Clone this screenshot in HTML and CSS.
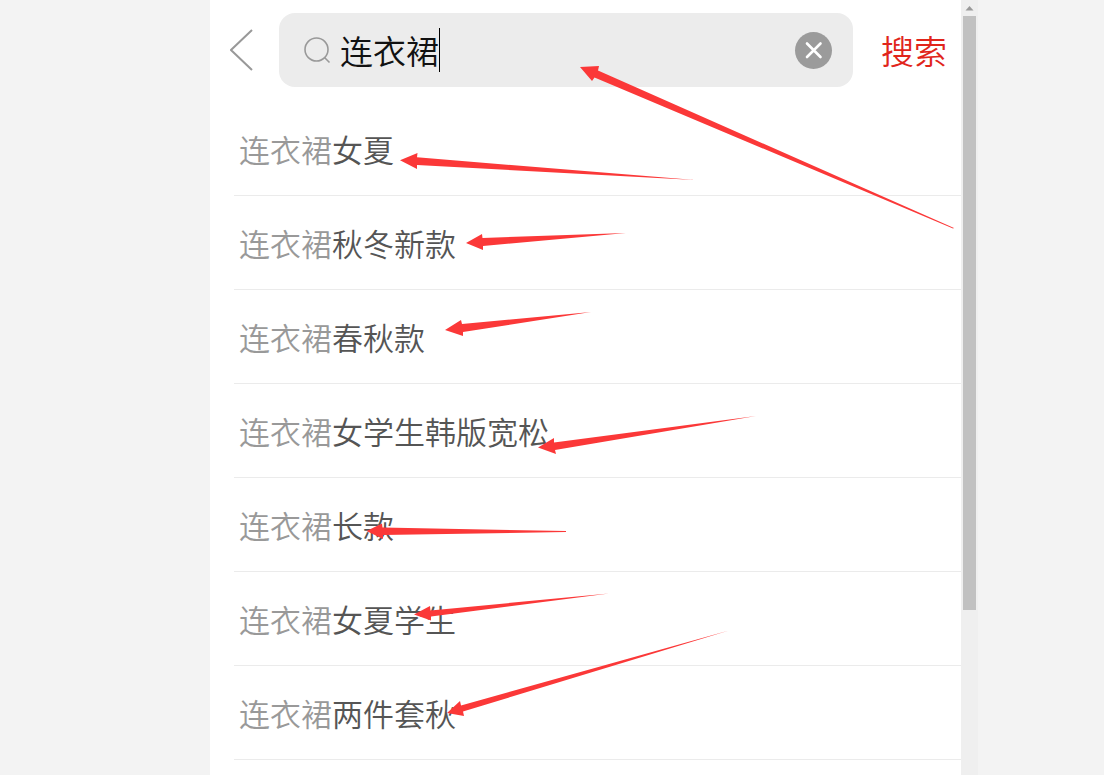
FILE: index.html
```html
<!DOCTYPE html>
<html lang="zh-CN">
<head>
    <meta charset="UTF-8">
    <title>搜索</title>
    <link rel="stylesheet" href="styles.css">
</head>
<body>
    <div class="page">
        <main class="phone">
            <div class="content">
                <form class="search-bar">
                    <button type="button" class="btn-back" aria-label="返回">
                        <svg width="24" height="42" viewBox="0 0 24 42"><path d="M22 1L1 21L22 41"/></svg>
                    </button>
                    <div class="search-box">
                        <svg class="icon-search" width="27" height="27" viewBox="0 0 27 27"><circle cx="12.5" cy="12.5" r="11.5"/><path d="M20.5 20.5L25.5 25.5"/></svg>
                        <div class="search-field">
                            <input type="text" class="search-input" value="连衣裙" aria-label="搜索商品">
                            <span class="caret"></span>
                        </div>
                        <button type="button" class="btn-clear" aria-label="清空">
                            <svg width="37" height="37" viewBox="0 0 37 37"><path d="M12 11.5L25.5 25M25.5 11.5L12 25"/></svg>
                        </button>
                    </div>
                    <button type="submit" class="btn-search">搜索</button>
                </form>
                <ul class="suggest">
                    <li><a href="#"><span class="key">连衣裙</span>女夏</a></li>
                    <li><a href="#"><span class="key">连衣裙</span>秋冬新款</a></li>
                    <li><a href="#"><span class="key">连衣裙</span>春秋款</a></li>
                    <li><a href="#"><span class="key">连衣裙</span>女学生韩版宽松</a></li>
                    <li><a href="#"><span class="key">连衣裙</span>长款</a></li>
                    <li><a href="#"><span class="key">连衣裙</span>女夏学生</a></li>
                    <li><a href="#"><span class="key">连衣裙</span>两件套秋</a></li>
                </ul>
            </div>
            <div class="scrollbar">
                <svg class="scroll-up" width="9" height="5" viewBox="0 0 9 5"><path d="M0.5 4.5L4.5 0L8.5 4.5Z"/></svg>
                <div class="scroll-thumb"></div>
                <div class="scroll-rest"></div>
            </div>
            <!-- 标注箭头 -->
            <svg class="arrows" width="768" height="775" viewBox="210 0 768 775">
                <polygon points="580,67 599,66 598,70.5 954,228 953,228.5 594.5,77.5 592,81"/>
                <polygon points="400,160.3 417.5,153 417,157.3 695,180 417,165 417,169"/>
                <polygon points="466,243 482,234 482.5,238 626,233 483,246 483,250"/>
                <polygon points="445,330 461,320 462,324 591,312 463,332 463,336"/>
                <polygon points="538,447.5 554,438 554,442.5 756,416 555,450 556,454"/>
                <polygon points="366.5,531 382,523.5 382.5,527.5 566,531 566,532 383,535 383,539"/>
                <polygon points="414,614.5 430,606 430.5,610.5 609,593.5 431,616.5 431,620.5"/>
                <polygon points="447,713 460,701 461,705.5 729,630.5 463,711.5 464,716"/>
            </svg>
        </main>
    </div>
</body>
</html>
```

FILE: styles.css
```css
html, body {
    margin: 0;
    padding: 0;
    height: 100%;
}

body {
    background: #f3f3f3;
    font-family: "Noto Sans CJK SC", sans-serif;
    font-weight: 350;
    overflow: hidden;
}

button, input {
    margin: 0;
    padding: 0;
    border: none;
    outline: none;
    background: none;
    font: inherit;
}

svg {
    display: block;
}

.page {
    display: grid;
    grid-template-columns: 5fr minmax(0, 768px) 3fr;
    height: 100%;
}

.phone {
    grid-column: 2;
    position: relative;
    display: flex;
    background: #fff;
}

.content {
    flex: 1;
    min-width: 0;
}

/* 搜索栏 */
.search-bar {
    display: flex;
    align-items: center;
    padding: 13px 14px 15px 20px;
}

.btn-back {
    margin-right: 25px;
}

    .btn-back path,
    .icon-search circle,
    .icon-search path {
        fill: none;
        stroke: #999;
        stroke-width: 2;
    }

    .icon-search circle,
    .icon-search path {
        stroke-width: 1.6;
    }

.search-box {
    flex: 1;
    display: flex;
    align-items: center;
    min-width: 0;
    height: 74px;
    padding: 0 21px 0 25px;
    box-sizing: border-box;
    border-radius: 16px;
    background: #ececec;
}

.search-field {
    position: relative;
    flex: 1;
    margin: 0 10px 0 9px;
    font-size: 33px;
}

.search-input {
    display: block;
    width: 100%;
    height: 48px;
    color: #111;
}

.caret {
    position: absolute;
    left: 3em;
    top: 2px;
    width: 1px;
    height: 44px;
    background: #000;
}

.btn-clear {
    border-radius: 50%;
    background: #9b9b9b;
}

    .btn-clear path {
        fill: none;
        stroke: #fff;
        stroke-width: 2.6;
        stroke-linecap: round;
    }

.btn-search {
    margin-left: 28px;
    font-size: 33px;
    line-height: 48px;
    color: #e1251b;
}

/* 联想词列表 */
.suggest {
    margin: 0;
    padding: 0 0 0 24px;
    list-style: none;
}

    .suggest a {
        display: block;
        padding: 0 5px;
        border-bottom: 1px solid #ebebeb;
        font-size: 31px;
        line-height: 93px;
        color: #555;
        text-decoration: none;
    }

    .suggest .key {
        color: #999;
    }

/* 滚动条 */
.scrollbar {
    display: flex;
    flex-direction: column;
    width: 17px;
    padding: 0 2px;
    box-sizing: border-box;
    background: #efefef;
}

.scroll-up {
    margin: 6px auto 5px;
    fill: #999;
}

.scroll-thumb {
    flex: 18;
    background: #c1c1c1;
}

.scroll-rest {
    flex: 5;
}

.arrows {
    position: absolute;
    left: 0;
    top: 0;
    fill: #fb3838;
    pointer-events: none;
}
```
